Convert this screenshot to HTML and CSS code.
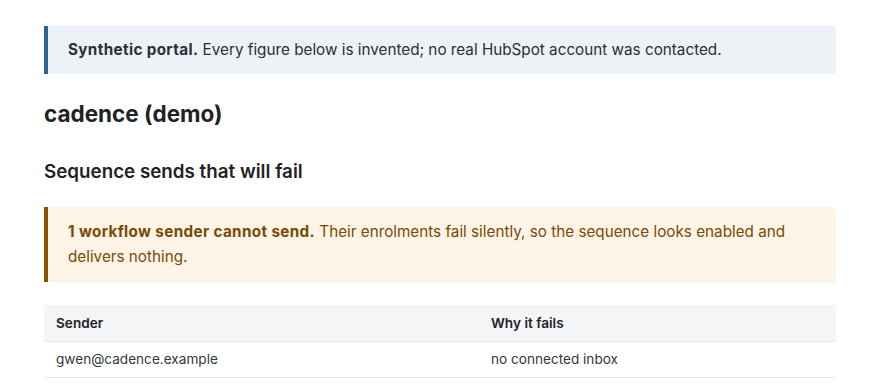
FILE: index.html
```html
<!DOCTYPE html>
<html lang="en">
<head>
<meta charset="utf-8">
<title>cadence (demo)</title>
<link rel="stylesheet" href="styles.css">
</head>
<body>
<main class="page">
  <div class="notice notice-info"><strong>Synthetic portal.</strong> Every figure below is invented; no real HubSpot account was contacted.</div>
  <h1 class="title">cadence (demo)</h1>
  <h2 class="section-title">Sequence sends that will fail</h2>
  <div class="notice notice-warn"><strong>1 workflow sender cannot send.</strong> Their enrolments fail silently, so the sequence looks enabled and delivers nothing.</div>
  <table class="table">
    <thead>
      <tr><th>Sender</th><th>Why it fails</th></tr>
    </thead>
    <tbody>
      <tr><td>gwen@cadence.example</td><td>no connected inbox</td></tr>
    </tbody>
  </table>
</main>
</body>
</html>
```
FILE: styles.css
```css
* { box-sizing: border-box; }
body {
  margin: 0;
  font-family: Inter, "Noto Sans", sans-serif;
  color: #1f2328;
  background: #ffffff;
}
.page {
  max-width: 792px;
  margin: 0 auto;
  padding-top: 26px;
}
.notice {
  font-size: 15.25px;
  border-radius: 0 4px 4px 0;
}
.notice strong { letter-spacing: 0.35px; }
.notice-info {
  background: #edf2f7;
  border-left: 4px solid #2f6690;
  color: #2b2f36;
  padding: 12px 20px;
  line-height: 24px;
}
.notice-warn {
  background: #fdf4e7;
  border-left: 4px solid #8a5300;
  color: #7a4a03;
  padding: 12px 20px 13px;
  line-height: 25px;
  margin-top: 22px;
}
.title {
  font-size: 22.5px;
  font-weight: 700;
  margin: 25px 0 0;
  line-height: 30px;
}
.section-title {
  font-size: 18.8px;
  font-weight: 600;
  margin: 30px 0 0;
  line-height: 26px;
}
.table {
  width: 100%;
  border-collapse: collapse;
  margin-top: 23px;
  font-size: 13.6px;
}
.table th {
  background: #f4f5f7;
  text-align: left;
  font-weight: 600;
  padding: 8px 12px;
  height: 36px;
  border-bottom: 1px solid #e6e8eb;
}
.table td {
  padding: 8px 12px;
  height: 36px;
  border-bottom: 1px solid #e6e8eb;
  color: #33373d;
}
.table th:first-child, .table td:first-child { width: 435px; }
```
